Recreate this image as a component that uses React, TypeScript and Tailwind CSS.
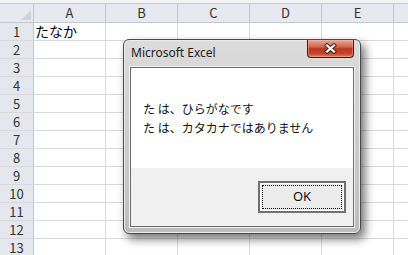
const cols = ["A", "B", "C", "D", "E", ""];
const rows = Array.from({ length: 13 }, (_, i) => i + 1);

function CloseGlyph() {
  return (
    <svg width="13" height="11" viewBox="0 0 13 11">
      <path d="M3 2.5 L10 8.5 M10 2.5 L3 8.5" stroke="#3a2a28" strokeWidth="4.2" strokeLinecap="square" fill="none" />
      <path d="M3 2.5 L10 8.5 M10 2.5 L3 8.5" stroke="#ffffff" strokeWidth="2.2" strokeLinecap="square" fill="none" />
    </svg>
  );
}

function MessageBox() {
  return (
    <div className="absolute left-[123px] top-[39px] flex h-[195px] w-[238px] flex-col rounded-[6px] border border-[#4a4a4a] bg-gradient-to-b from-[#dcdcdc] to-[#bdbdbd] px-[6px] pb-[6px] shadow-[4px_5px_10px_rgba(0,0,0,0.55),inset_0_0_0_1px_#ececec]">
      <div className="flex h-[27px] items-start justify-between">
        <span className="pl-[1px] pt-[5px] font-['Noto_Sans',sans-serif] text-[12px] leading-[16px] text-[#1b1b1b]">
          Microsoft Excel
        </span>
        <div className="flex h-[18px] w-[47px] items-center justify-center rounded-b-[4px] border border-t-0 border-[#4a1810] bg-[linear-gradient(#e9a898,#d4654d_40%,#b9361f_52%,#c4452b_80%,#e08266)] shadow-[inset_0_0_0_1px_rgba(255,200,180,0.35)]">
          <CloseGlyph />
        </div>
      </div>
      <div className="flex flex-1 flex-col border border-[#6c6c6c] shadow-[0_0_0_1px_#f2f2f2]">
        <div className="h-[100px] bg-white pl-[12px] pt-[31px] font-['Noto_Sans_CJK_JP',sans-serif] text-[12px] leading-[19px] text-[#111]">
          <p>た は、ひらがなです</p>
          <p>た は、カタカナではありません</p>
        </div>
        <div className="flex flex-1 justify-end bg-[#f0f0f0] pr-[7px] pt-[13px]">
          <div className="flex h-[32px] w-[88px] border-2 border-[#707070] bg-[#ececec] p-[2px] shadow-[inset_0_0_0_1px_#ffffff]">
            <div className="flex flex-1 items-center justify-center border border-dotted border-black font-['Noto_Sans',sans-serif] text-[13px] text-[#111]">
              OK
            </div>
          </div>
        </div>
      </div>
    </div>
  );
}

export default function App() {
  return (
    <div className="relative h-[255px] w-[408px] overflow-hidden bg-white font-['Noto_Sans_CJK_JP',sans-serif]">
      <div className="h-[4px] border-b border-[#c8c8c8] bg-[#f4f4f4]" />
      <div className="flex h-[19px] border-b border-[#c2c8d0] bg-[#e6eaf0]">
        <div className="flex w-[34px] shrink-0 items-end justify-end border-r border-[#c2c8d0] p-[2px]">
          <svg width="10" height="10" viewBox="0 0 10 10">
            <polygon points="10,0 10,10 0,10" fill="#d0d4da" />
          </svg>
        </div>
        {cols.map((c, i) => (
          <div
            key={i}
            className="w-[72px] shrink-0 border-r border-[#c2c8d0] text-center text-[13px] leading-[18px] text-[#333]"
          >
            {c}
          </div>
        ))}
      </div>
      {rows.map((r) => (
        <div key={r} className="flex h-[18px] border-b border-[#d9d9d9]">
          <div className="w-[34px] shrink-0 border-r border-[#c2c8d0] bg-[#e4e8ee] text-center text-[13px] leading-[17px] text-[#333]">
            {r}
          </div>
          {cols.map((c, i) => (
            <div
              key={i}
              className="w-[72px] shrink-0 border-r border-[#d9d9d9] pl-[1px] text-[14px] leading-[17px] text-black"
            >
              {r === 1 && c === "A" ? "たなか" : ""}
            </div>
          ))}
        </div>
      ))}
      <MessageBox />
    </div>
  );
}
